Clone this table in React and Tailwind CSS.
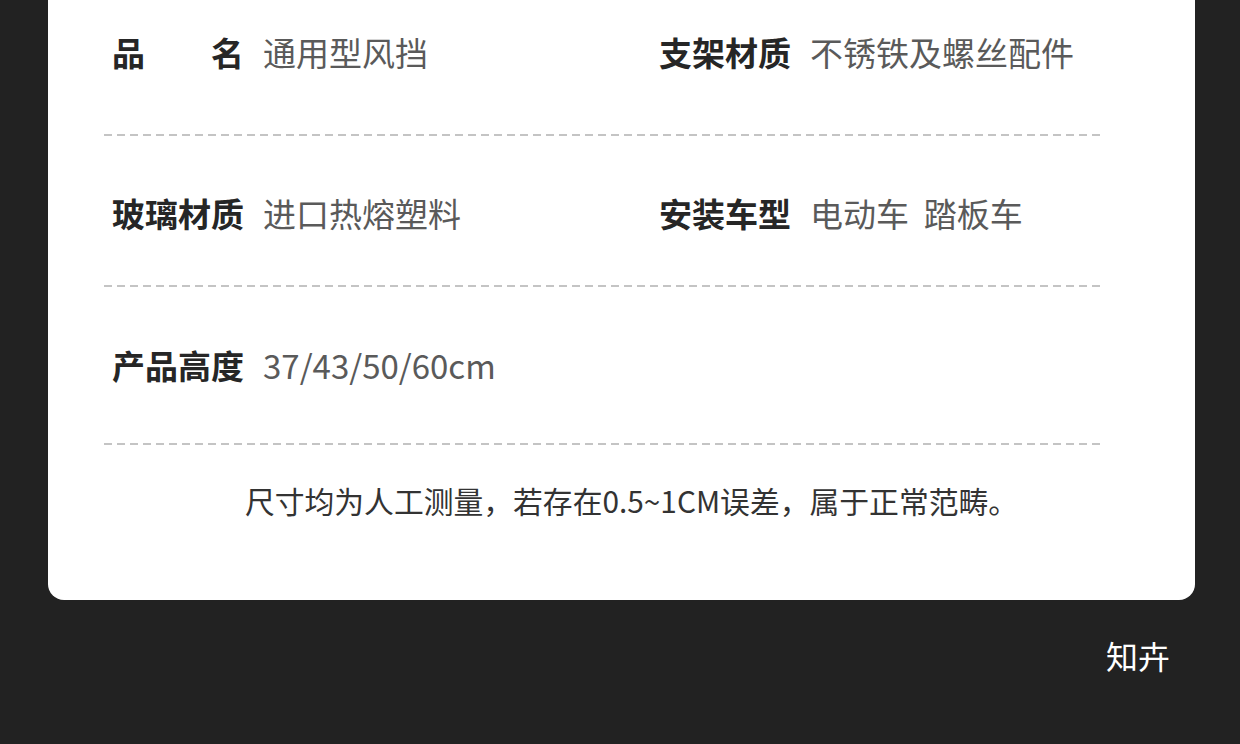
import React from 'react';

const rows = [
  [
    { label: '品名', value: '通用型风挡', spread: true },
    { label: '支架材质', value: '不锈铁及螺丝配件' },
  ],
  [
    { label: '玻璃材质', value: '进口热熔塑料' },
    { label: '安装车型', value: '电动车  踏板车' },
  ],
  [{ label: '产品高度', value: '37/43/50/60cm' }],
];

const Dashed = () => (
  <div className="h-[2px] w-full bg-[repeating-linear-gradient(to_right,#c4c4c4_0_8px,transparent_8px_13px)]" />
);

const Cell = ({ label, value, spread }) => (
  <div className="flex items-center">
    {spread ? (
      <span className="flex w-[132px] justify-between font-bold text-[#262626]">
        {label.split('').map((c) => (
          <span key={c}>{c}</span>
        ))}
      </span>
    ) : (
      <span className="w-[132px] font-bold text-[#262626]">{label}</span>
    )}
    <span className="ml-[19px] whitespace-pre text-[#5a5a5a]">{value}</span>
  </div>
);

const App = () => {
  const gaps = ['mt-[32px]', 'mt-[57px]', 'mt-[58px]'];
  const after = ['mb-[62px]', 'mb-[52px]', 'mb-[58px]'];
  return (
    <div
      className="flow-root min-h-[744px] w-[1240px] bg-[#222222] pl-[48px] pr-[45px]"
      style={{ fontFamily: '"Noto Sans CJK SC", "Noto Sans", sans-serif' }}
    >
      <div className="flow-root rounded-b-[16px] bg-white pb-[85px]">
        <div className="ml-[56px] mr-[90px]">
          {rows.map((row, i) => (
            <div key={i}>
              <div className={`grid grid-cols-[547px_1fr] pl-[8px] text-[33px] leading-[40px] ${gaps[i]} ${after[i]}`}>
                {row.map((cell) => (
                  <Cell key={cell.label} {...cell} />
                ))}
              </div>
              <Dashed />
            </div>
          ))}
        </div>
        <p className="mt-[40px] pl-[20px] text-center text-[29.8px] leading-[30px] text-[#333333]">
          尺寸均为人工测量，若存在0.5~1CM误差，属于正常范畴。
        </p>
      </div>
      <div className="mt-[35px] pr-[25px] text-right text-[32px] leading-[40px] text-white">知卉</div>
    </div>
  );
};

export default App;
